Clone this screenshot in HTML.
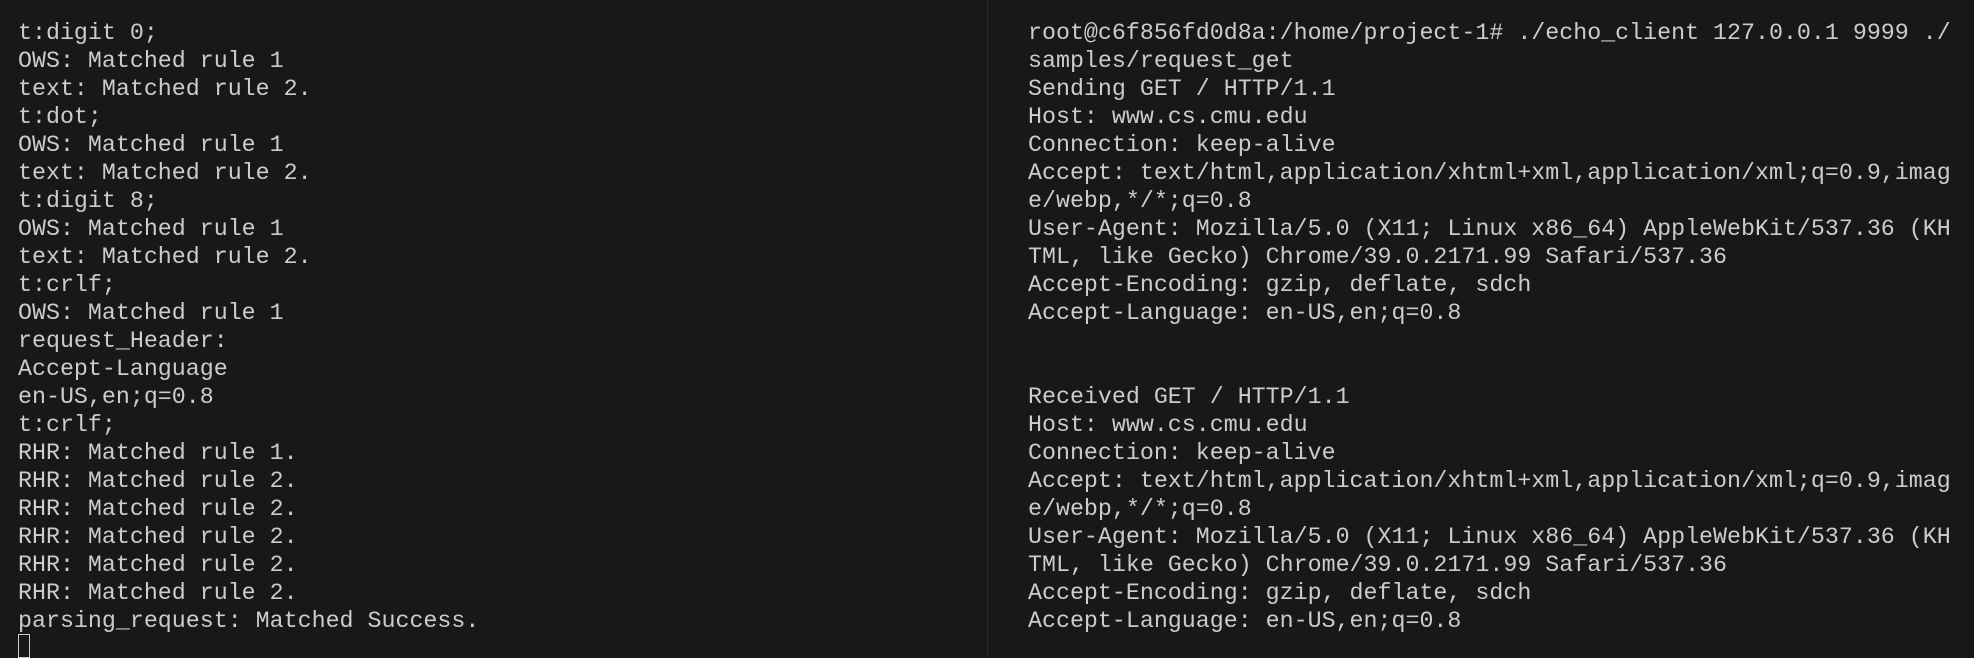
<!DOCTYPE html>
<html><head><meta charset="utf-8"><style>
html,body{margin:0;padding:0;background:#181818;width:1974px;height:656px;overflow:hidden}
pre{position:absolute;top:19px;margin:0;font-family:"Liberation Mono","DejaVu Sans Mono",monospace;font-size:23.3px;line-height:28px;color:#cccccc;white-space:pre}
#l{left:18px}#r{left:1028px}
#div{position:absolute;left:987px;top:0;width:1px;height:656px;background:#2b2b2b}
#cur{position:absolute;left:18px;top:634px;width:12px;height:24px;border:1.5px solid #cccccc;box-sizing:border-box}
</style></head><body>
<div id="div"></div>
<pre id="l">t:digit 0;
OWS: Matched rule 1
text: Matched rule 2.
t:dot;
OWS: Matched rule 1
text: Matched rule 2.
t:digit 8;
OWS: Matched rule 1
text: Matched rule 2.
t:crlf;
OWS: Matched rule 1
request_Header:
Accept-Language
en-US,en;q=0.8
t:crlf;
RHR: Matched rule 1.
RHR: Matched rule 2.
RHR: Matched rule 2.
RHR: Matched rule 2.
RHR: Matched rule 2.
RHR: Matched rule 2.
parsing_request: Matched Success.</pre>
<div id="cur"></div>
<pre id="r">root@c6f856fd0d8a:/home/project-1# ./echo_client 127.0.0.1 9999 ./
samples/request_get
Sending GET / HTTP/1.1
Host: www.cs.cmu.edu
Connection: keep-alive
Accept: text/html,application/xhtml+xml,application/xml;q=0.9,imag
e/webp,*/*;q=0.8
User-Agent: Mozilla/5.0 (X11; Linux x86_64) AppleWebKit/537.36 (KH
TML, like Gecko) Chrome/39.0.2171.99 Safari/537.36
Accept-Encoding: gzip, deflate, sdch
Accept-Language: en-US,en;q=0.8


Received GET / HTTP/1.1
Host: www.cs.cmu.edu
Connection: keep-alive
Accept: text/html,application/xhtml+xml,application/xml;q=0.9,imag
e/webp,*/*;q=0.8
User-Agent: Mozilla/5.0 (X11; Linux x86_64) AppleWebKit/537.36 (KH
TML, like Gecko) Chrome/39.0.2171.99 Safari/537.36
Accept-Encoding: gzip, deflate, sdch
Accept-Language: en-US,en;q=0.8</pre>
</body></html>
